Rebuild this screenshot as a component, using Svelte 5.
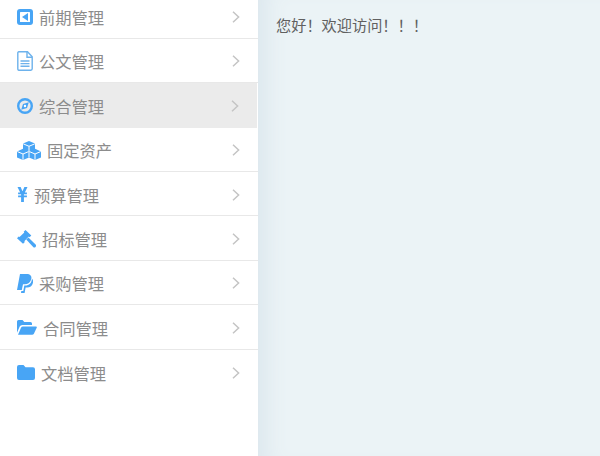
<script>
  const menu = [
    { name: '前期管理', icon: 'back', gap: 6 },
    { name: '公文管理', icon: 'file', gap: 6 },
    { name: '综合管理', icon: 'compass', gap: 6, active: true },
    { name: '固定资产', icon: 'cubes', gap: 6 },
    { name: '预算管理', icon: 'yen', gap: 6 },
    { name: '招标管理', icon: 'gavel', gap: 6 },
    { name: '采购管理', icon: 'paypal', gap: 6 },
    { name: '合同管理', icon: 'open', gap: 6 },
    { name: '文档管理', icon: 'folder', gap: 6 }
  ];
</script>

<div class="page">
  <aside class="sidebar">
    <ul>
      {#each menu as item}
        <li class:active={item.active}>
          <span class="icon {item.icon}">
            {#if item.icon === 'back'}
              <svg width="16" height="16" viewBox="0 0 16 16"><rect width="16" height="16" rx="3" fill="#48a5f5"/><rect x="3" y="3" width="10" height="10" rx="0.5" fill="#fff"/><path d="M11 4v8L5 8z" fill="#48a5f5"/></svg>
            {:else if item.icon === 'file'}
              <svg width="16" height="20" viewBox="0 0 16 20" fill="none" stroke="#6db2ec" stroke-width="1.400"><path d="M1.800.8h8.700l4.700 5v12q0 1.400-1.400 1.400H1.800q-1 0-1-1.400V2q0-1.200 1-1.200z"/><path d="M10 1v5.300h5"/><path d="M3.500 10h9M3.500 12.600h9M3.500 15.200h9"/></svg>
            {:else if item.icon === 'compass'}
              <svg width="16" height="16" viewBox="0 0 16 16"><circle cx="8" cy="8" r="6.800" fill="none" stroke="#48a5f5" stroke-width="2.400"/><path d="M11.800 4.200 10 10 4.200 11.800 6 6z" fill="#48a5f5"/><circle cx="8" cy="8" r="1.200" fill="#fff"/></svg>
            {:else if item.icon === 'cubes'}
              <svg width="24" height="19" viewBox="0 0 24 19"><g fill="#48a5f5"><path d="M12 0l6 2.600v6.200l-6 2.600-6-2.600V2.600z"/><path d="M6 7.800l6 2.600v6L6 19l-6-2.600v-6z"/><path d="M18 7.800l6 2.600v6L18 19l-6-2.600v-6z"/></g><path d="M6.200 2.800 12 5.300l5.800-2.500M12 5.300v5M.4 10.600 6 13l5.600-2.400M6 13v5.800M12.400 10.600 18 13l5.600-2.400M18 13v5.800M12 10.400v6" fill="none" stroke="#fff" stroke-width="1"/></svg>
            {:else if item.icon === 'yen'}
              <svg width="11" height="15" viewBox="0 0 11 15"><path d="M.5 0h3.100l1.900 4.300L7.400 0h3.100L7.800 5.400h2.100v1.800H6.900v1.200h3v1.800h-3V15H4.100v-4.800h-3V8.400h3V7.200h-3V5.400h2.100z" fill="#48a5f5"/></svg>
            {:else if item.icon === 'gavel'}
              <svg width="19" height="18" viewBox="0 0 19 18"><path d="M8.500 0l5.800 5.500-1.700 1.700-.8-.6-4.500 4.600.6.800L6 13.800 0 8.200l1.700-1.800.8.600L7.300 2.400l-.6-.6z" fill="#48a5f5"/><path d="M9.200 9.600 11.400 7.400 18.600 14.600a1.700 1.700 0 0 1-2.400 2.400z" fill="#48a5f5"/></svg>
            {:else if item.icon === 'paypal'}
              <svg width="16" height="19" viewBox="0 0 16 19"><path d="M3 0h6.500C13.200 0 15 2 14.300 5c-.8 3.500-3.300 5.300-6.800 5.300H6L4.800 16H0z" fill="#48a5f5"/><path d="M15 4.800c1.100 1 1.300 2.600.9 4.100-.7 3-3 4.600-5.800 4.600H8.600L7.600 19H4l.3-2h2l1-5.400h1.300c3.400 0 6-2.300 6.400-6.800z" fill="#48a5f5"/></svg>
            {:else if item.icon === 'open'}
              <svg width="20" height="15" viewBox="0 0 20 15"><path d="M0 12.800V1.500Q0 0 1.500 0h4l1.800 2h6.200q1.500 0 1.500 1.500V5H5.200Q3.500 5 2.700 6.500z" fill="#48a5f5"/><path d="M1 14.700 4 7.700Q4.600 6.500 6 6.500h13q1.200 0 .7 1.200L17 13.500q-.6 1.200-2 1.200z" fill="#48a5f5"/></svg>
            {:else}
              <svg width="18" height="15" viewBox="0 0 18 15"><path d="M0 2Q0 0 2 0h4.500l2 2.200H16q2 0 2 2V13q0 2-2 2H2q-2 0-2-2z" fill="#48a5f5"/></svg>
            {/if}
          </span>
          <span class="name" style="margin-left: {item.gap}px">{item.name}</span>
          <svg class="arrow" width="8" height="12" viewBox="0 0 8 12" fill="none" stroke="#c4c4c4" stroke-width="1.500"><path d="M1 .8 6.600 6 1 11.200"/></svg>
        </li>
      {/each}
    </ul>
  </aside>
  <main class="content">
    <p>您好！欢迎访问！！！</p>
  </main>
</div>

<style>
  :global(body) { margin: 0; }
  .page {
    display: flex;
    width: 600px;
    height: 456px;
    overflow: hidden;
    font-family: "Noto Sans CJK SC", "Liberation Sans", sans-serif;
  }
  .sidebar { width: 258px; flex: none; background: #fff; }
  ul { list-style: none; margin: -5.6px 0 0; padding: 0; }
  li {
    display: flex;
    align-items: center;
    box-sizing: border-box;
    height: 44.4px;
    padding: 2px 18px 0 17px;
    border-bottom: 1px solid #e8e8e8;
    font-size: 16.3px;
    color: #8c8c8c;
  }
  li:last-child { border-bottom: none; }
  li.active { background: #ebebeb; border-bottom-color: #ebebeb; margin-right: 1px; }
  .icon { display: flex; align-items: center; }
  .arrow { margin-left: auto; }
  .content {
    flex: 1;
    background: #ebf3f6;
    box-shadow: inset 24px 0 20px -14px #dde8ee;
    padding: 14px 18px;
  }
  p { margin: 0; font-size: 15.2px; line-height: 20px; color: #606060; }
</style>
